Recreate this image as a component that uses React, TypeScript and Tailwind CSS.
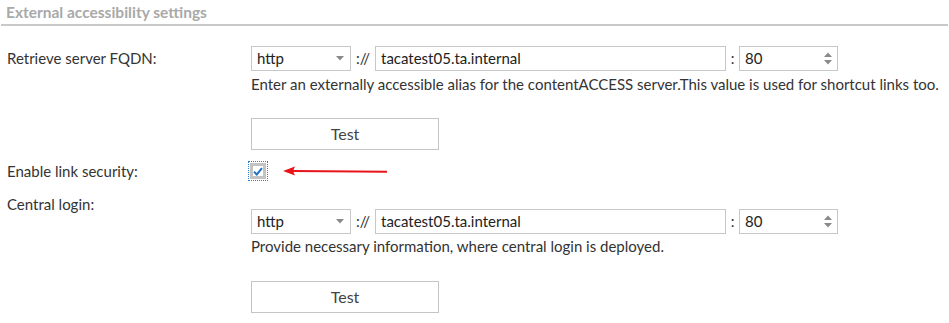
import React from "react";

function Select() {
  return (
    <div className="w-[100px] h-[25px] border border-[#c8c8c8] bg-white flex items-center pl-[5px] pr-[6px]">
      <span className="flex-1 text-[#222]">http</span>
      <svg width="8" height="5" viewBox="0 0 8 5">
        <path d="M0 0 L8 0 L4 4.5 Z" fill="#8a8a8a" />
      </svg>
    </div>
  );
}

function HostRow({ host, port }: { host: string; port: string }) {
  return (
    <div className="flex items-center h-[25px]">
      <Select />
      <span className="w-[24px] text-center text-[#333]">://</span>
      <div className="w-[351px] h-[25px] border border-[#c8c8c8] flex items-center pl-[5px] text-[#222]">
        {host}
      </div>
      <span className="w-[13px] text-center text-[#333]">:</span>
      <div className="w-[99px] h-[25px] border border-[#c8c8c8] flex items-center pl-[5px] pr-[5px] text-[#222]">
        <span className="flex-1">{port}</span>
        <div className="flex flex-col gap-[3px]">
          <svg width="8" height="5" viewBox="0 0 8 5">
            <path d="M0 5 L8 5 L4 0.5 Z" fill="#8a8a8a" />
          </svg>
          <svg width="8" height="5" viewBox="0 0 8 5">
            <path d="M0 0 L8 0 L4 4.5 Z" fill="#8a8a8a" />
          </svg>
        </div>
      </div>
    </div>
  );
}

function TestButton() {
  return (
    <button className="w-[188px] h-[32px] border border-[#c4c4c4] bg-white text-[16px] text-[#444]">
      Test
    </button>
  );
}

export default function App() {
  return (
    <div className="w-[949px] h-[323px] bg-white font-['Lato',sans-serif] text-[15px] text-[#333] overflow-hidden">
      <div className="mx-[1px] pl-[5px] pt-[2px] h-[26px] border-b-2 border-[#c9c9c9]">
        <h2 className="font-bold text-[15.5px] leading-[20px] text-[#a9a9a9]">External accessibility settings</h2>
      </div>

      <div className="pl-[7px]">
        <div className="flex mt-[20px]">
          <div className="w-[244px] leading-[25px]">Retrieve server FQDN:</div>
          <div>
            <HostRow host="tacatest05.ta.internal" port="80" />
            <p className="mt-[3px] leading-[20px]">
              Enter an externally accessible alias for the contentACCESS server.This value is used for shortcut links too.
            </p>
            <div className="mt-[24px]">
              <TestButton />
            </div>
          </div>
        </div>

        <div className="flex items-center mt-[11px] h-[20px]">
          <div className="w-[244px]">Enable link security:</div>
          <div className="flex items-center ml-[-3px]">
            <div className="w-[20px] h-[20px] border border-dotted border-[#2a7fd4] p-[1px]">
              <div className="w-full h-full border-[3px] border-[#c3c3c3] bg-white flex items-center justify-center">
                <svg width="10" height="9" viewBox="0 0 10 9">
                  <path d="M1 4.8 L3.8 7.5 L9 1.2" stroke="#1e73c8" strokeWidth="2" fill="none" />
                </svg>
              </div>
            </div>
            <svg width="105" height="10" viewBox="0 0 105 10" className="ml-[15px]">
              <path d="M10 5 L104 5.8" stroke="#e8141a" strokeWidth="2" fill="none" />
              <path d="M0 5 L12 0.5 L10 5 L12 9.5 Z" fill="#e8141a" />
            </svg>
          </div>
        </div>

        <div className="mt-[16px] leading-[14px]">Central login:</div>
        <div className="pl-[244px] mt-[-2px]">
          <HostRow host="tacatest05.ta.internal" port="80" />
          <p className="mt-[2px] leading-[20px]">Provide necessary information, where central login is deployed.</p>
          <div className="mt-[25px]">
            <TestButton />
          </div>
        </div>
      </div>
    </div>
  );
}
